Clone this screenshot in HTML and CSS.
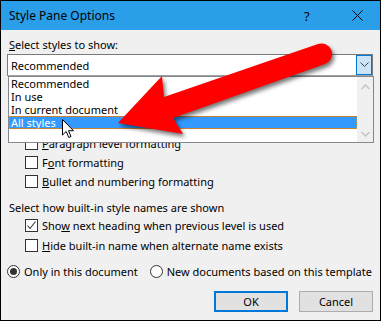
FILE: index.html
```html
<!DOCTYPE html>
<html lang="en">
<head>
  <meta charset="UTF-8">
  <title>Style Pane Options</title>
  <link rel="stylesheet" href="styles.css">
</head>
<body>

<div class="dialog">
  <div class="titlebar">
    <span class="title">Style Pane Options</span>
    <span class="help">?</span>
    <svg class="close" width="11" height="11" viewBox="0 0 11 11">
      <path d="M0.5 0.5 L10.5 10.5 M10.5 0.5 L0.5 10.5" stroke="#000" stroke-width="1"/>
    </svg>
  </div>

  <div class="content">
    <div class="label"><u>S</u>elect styles to show:</div>
    <div class="combo">
      <span class="combo-value">Recommended</span>
      <span class="combo-btn">
        <svg width="9" height="6" viewBox="0 0 9 6"><path d="M0.5 0.5 L4.5 4.5 L8.5 0.5" fill="none" stroke="#404040"/></svg>
      </span>
    </div>

    <div class="checks">
      <div class="check-row"><span class="box"></span><span><u>P</u>aragraph level formatting</span></div>
      <div class="check-row"><span class="box"></span><span>F<u>o</u>nt formatting</span></div>
      <div class="check-row"><span class="box"></span><span><u>B</u>ullet and numbering formatting</span></div>
    </div>

    <div class="label section">Select how built-in style names are shown</div>
    <div class="checks wide">
      <div class="check-row">
        <span class="box">
          <svg width="11" height="11" viewBox="0 0 11 11"><path d="M1.5 5.5 L4 8.5 L9.5 1.5" fill="none" stroke="#333" stroke-width="1.1"/></svg>
        </span>
        <span>Sho<u>w</u> next heading when previous level is used</span>
      </div>
      <div class="check-row"><span class="box"></span><span><u>H</u>ide built-in name when alternate name exists</span></div>
    </div>

    <div class="radios">
      <div class="radio-item"><span class="radio on"></span><span>Only in this document</span></div>
      <div class="radio-item"><span class="radio"></span><span>New documents based on this template</span></div>
    </div>

    <div class="buttons">
      <button class="btn default">OK</button>
      <button class="btn">Cancel</button>
    </div>

    <!-- open dropdown list, drawn over the dialog -->
    <div class="listbox">
      <ul class="items">
        <li>Recommended</li>
        <li>In use</li>
        <li>In current document</li>
        <li class="selected">All styles</li>
      </ul>
      <div class="scrollbar">
        <svg width="9" height="6" viewBox="0 0 9 6"><path d="M0.5 5 L4.5 1 L8.5 5" fill="none" stroke="#c2c2c2" stroke-width="1.3"/></svg>
        <svg width="9" height="6" viewBox="0 0 9 6"><path d="M0.5 1 L4.5 5 L8.5 1" fill="none" stroke="#c2c2c2" stroke-width="1.3"/></svg>
      </div>
    </div>
  </div>

  <svg class="arrow" width="381" height="321" viewBox="0 0 381 321">
    <path d="M118 123 L162 76 L164 97 L318 44 A10.5 10.5 0 0 1 325 64 L173 118 L183 134 Z" fill="#ff0000"/>
  </svg>

  <svg class="cursor" width="13" height="20" viewBox="0 0 13 20">
    <path d="M0.5 0.5 L0.5 16 L4.2 12.5 L6.8 18.5 L9 17.5 L6.5 11.7 L11.5 11.7 Z" fill="#fff" stroke="#000" stroke-width="1" stroke-linejoin="miter"/>
  </svg>
</div>

</body>
</html>
```

FILE: styles.css
```css
body {
  margin: 0;
  font-family: 'Noto Sans', 'Open Sans', sans-serif;
  font-size: 11px;
  color: #000;
  background-color: #fff;
}
.dialog {
  position: relative;
  width: 381px;
  height: 321px;
  box-sizing: border-box;
  border: 1px solid #000;
  background-color: #f0f0f0;
  overflow: hidden;
}
.titlebar {
  height: 29px;
  background-color: #2b9ee9;
  display: flex;
  align-items: center;
  padding: 0 0 0 8px;
}
.title {
  flex: 1;
  font-size: 12px;
}
.help {
  width: 14px;
  margin-right: 34px;
  font-size: 13px;
}
.close {
  margin-right: 17px;
}
.content {
  padding: 0 6px;
}
.label {
  height: 14px;
  line-height: 14px;
  margin-top: 8px;
  padding-left: 2px;
}
.combo {
  margin-top: 2px;
  height: 22px;
  box-sizing: border-box;
  width: 366px;
  border: 1px solid #7a7a7a;
  border-bottom-color: #a0a0a0;
  background-color: #fff;
  display: flex;
  align-items: center;
}
.combo-value {
  flex: 1;
  padding-left: 3px;
}
.combo-btn {
  width: 16px;
  height: 20px;
  box-sizing: border-box;
  border: 1px solid #0078d7;
  background-color: #cce4f7;
  display: flex;
  align-items: center;
  justify-content: center;
}
.checks {
  margin-top: 58px;
  padding-left: 18px;
}
.check-row {
  height: 19px;
  display: flex;
  align-items: center;
}
.checks.wide {
  margin-top: 0;
}
.checks.wide .check-row {
  height: 20px;
}
.box {
  width: 13px;
  height: 13px;
  box-sizing: border-box;
  border: 1px solid #333;
  background-color: #fff;
  margin-right: 4px;
  display: flex;
  align-items: center;
  justify-content: center;
}
.label.section {
  margin-top: 10px;
}
.radios {
  margin-top: 7px;
  height: 19px;
  display: flex;
  align-items: center;
  gap: 12px;
}
.radio-item {
  display: flex;
  align-items: center;
  white-space: nowrap;
}
.radio {
  width: 13px;
  height: 13px;
  box-sizing: border-box;
  border: 1px solid #333;
  border-radius: 50%;
  background-color: #fff;
  margin-right: 4px;
  display: flex;
  align-items: center;
  justify-content: center;
}
.radio.on::after {
  content: '';
  width: 7px;
  height: 7px;
  border-radius: 50%;
  background-color: #333;
}
.buttons {
  margin-top: 10px;
  display: flex;
  justify-content: flex-end;
  gap: 11px;
  padding-right: 1px;
}
.btn {
  width: 74px;
  height: 21px;
  box-sizing: border-box;
  font-family: inherit;
  font-size: 11px;
  color: #000;
  background-color: #e1e1e1;
  border: 1px solid #adadad;
  padding: 0;
}
.btn.default {
  border: 2px solid #0078d7;
}
.listbox {
  position: absolute;
  left: 7px;
  top: 75px;
  width: 366px;
  height: 67px;
  box-sizing: border-box;
  border: 1px solid #828790;
  background-color: #fff;
  display: flex;
}
.items {
  flex: 1;
  list-style: none;
  margin: 0;
  padding: 0;
}
.items li {
  height: 13px;
  line-height: 13px;
  padding-left: 2px;
  box-sizing: border-box;
}
.items li.selected {
  background-color: #3399ff;
  color: #fff;
  outline: 1px dotted #d08a3c;
  outline-offset: -1px;
}
.scrollbar {
  width: 16px;
  background-color: #f0f0f0;
  display: flex;
  flex-direction: column;
  justify-content: space-between;
  align-items: center;
  padding: 7px 0 5px;
}
.arrow {
  position: absolute;
  left: -1px;
  top: -1px;
  pointer-events: none;
  filter: drop-shadow(2px 3px 2px rgba(0, 0, 0, 0.55));
}
.cursor {
  position: absolute;
  left: 61px;
  top: 118px;
  pointer-events: none;
}
```
